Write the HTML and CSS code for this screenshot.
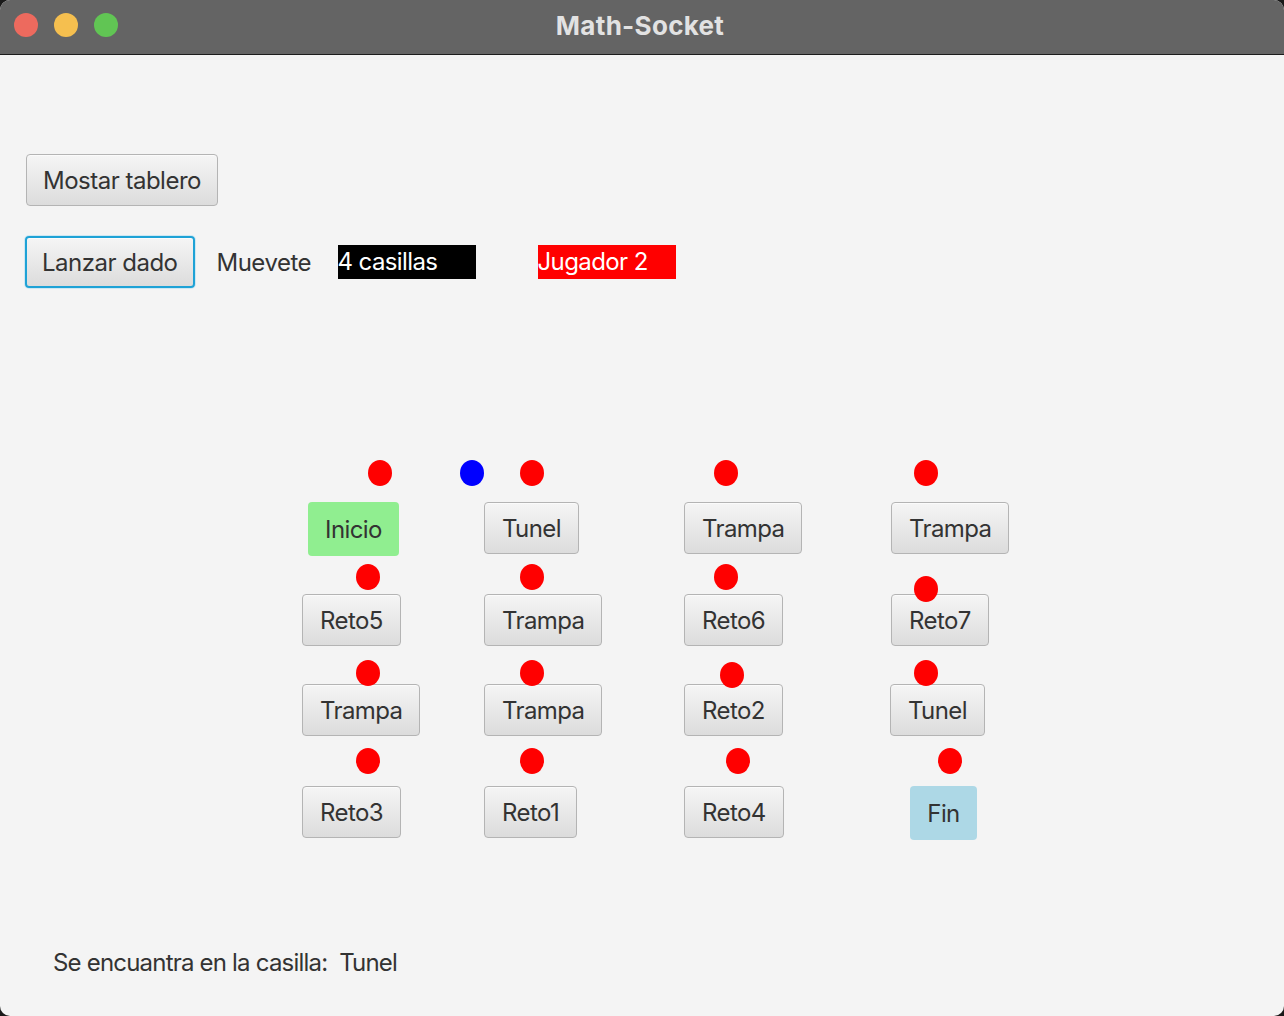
FILE: index.html
```html
<!DOCTYPE html>
<html lang="es">
<head>
<meta charset="utf-8">
<title>Math-Socket</title>
<link rel="stylesheet" href="styles.css">
</head>
<body>
<div class="window">
  <header class="titlebar">
    <div class="lights">
      <span class="light red"></span>
      <span class="light yellow"></span>
      <span class="light green"></span>
    </div>
    <div class="title">Math-Socket</div>
  </header>
  <main class="content">
    <section class="controls">
      <div class="row">
        <button class="fxbtn">Mostar tablero</button>
      </div>
      <div class="row row2">
        <button class="fxbtn focused">Lanzar dado</button>
        <span class="label muevete">Muevete</span>
        <span class="box black">4 casillas</span>
        <span class="box redbox">Jugador 2</span>
      </div>
    </section>
    <section class="board">
      <button class="fxbtn cell inicio c1 r1">Inicio</button>
      <button class="fxbtn cell c2 r1">Tunel</button>
      <button class="fxbtn cell c3 r1">Trampa</button>
      <button class="fxbtn cell c4 r1">Trampa</button>

      <button class="fxbtn cell c1b r2">Reto5</button>
      <button class="fxbtn cell c2 r2">Trampa</button>
      <button class="fxbtn cell c3 r2">Reto6</button>
      <button class="fxbtn cell c4 r2">Reto7</button>

      <button class="fxbtn cell c1b r3">Trampa</button>
      <button class="fxbtn cell c2 r3">Trampa</button>
      <button class="fxbtn cell c3 r3">Reto2</button>
      <button class="fxbtn cell c4b r3">Tunel</button>

      <button class="fxbtn cell c1b r4">Reto3</button>
      <button class="fxbtn cell c2 r4">Reto1</button>
      <button class="fxbtn cell c3 r4">Reto4</button>
      <button class="fxbtn cell fin r4">Fin</button>

      <span class="dot" style="left:368px;top:20px"></span>
      <span class="dot blue" style="left:460px;top:20px"></span>
      <span class="dot" style="left:520px;top:20px"></span>
      <span class="dot" style="left:714px;top:20px"></span>
      <span class="dot" style="left:914px;top:20px"></span>

      <span class="dot" style="left:356px;top:124px"></span>
      <span class="dot" style="left:520px;top:124px"></span>
      <span class="dot" style="left:714px;top:124px"></span>
      <span class="dot" style="left:914px;top:136px"></span>

      <span class="dot" style="left:356px;top:220px"></span>
      <span class="dot" style="left:520px;top:220px"></span>
      <span class="dot" style="left:720px;top:222px"></span>
      <span class="dot" style="left:914px;top:220px"></span>

      <span class="dot" style="left:356px;top:308px"></span>
      <span class="dot" style="left:520px;top:308px"></span>
      <span class="dot" style="left:726px;top:308px"></span>
      <span class="dot" style="left:938px;top:308px"></span>
    </section>
    <p class="status">Se encuantra en la casilla:&nbsp; Tunel</p>
  </main>
</div>
</body>
</html>
```
FILE: styles.css
```css
* { box-sizing: border-box; }

html, body {
  margin: 0;
  padding: 0;
  background: #1a1a1a;
}

body {
  width: 1284px;
  height: 1016px;
  overflow: hidden;
  font-family: "Inter", "Liberation Sans", sans-serif;
}

.window {
  width: 1284px;
  height: 1016px;
  background: #f4f4f4;
  border-radius: 10px;
  overflow: hidden;
  display: flex;
  flex-direction: column;
}

.titlebar {
  height: 55px;
  flex: 0 0 55px;
  background: #646464;
  border-bottom: 1px solid #1c1c1c;
  position: relative;
  display: flex;
  align-items: center;
  justify-content: center;
}

.lights {
  position: absolute;
  left: 14px;
  top: 13px;
  display: flex;
  gap: 16px;
}

.light {
  width: 24px;
  height: 24px;
  border-radius: 50%;
  display: block;
}
.light.red { background: #ed6a5e; }
.light.yellow { background: #f5bf4f; }
.light.green { background: #61c554; }

.title {
  color: #e2e2e2;
  font-weight: 700;
  font-size: 26px;
  letter-spacing: 0.3px;
  margin-top: -3px;
  margin-left: -4px;
}

.content {
  flex: 1;
  display: flex;
  flex-direction: column;
}

.controls {
  padding: 99px 0 0 26px;
  display: flex;
  flex-direction: column;
  gap: 30px;
}

.row {
  display: flex;
  align-items: center;
}

.fxbtn {
  font-family: inherit;
  font-size: 24px;
  color: #333333;
  height: 52px;
  padding: 0 17px;
  border: 1px solid #b4b4b4;
  border-radius: 4px;
  background: linear-gradient(#f5f5f5, #dcdcdc);
  box-shadow: inset 0 1px 0 #fbfbfb;
  display: flex;
  align-items: center;
  justify-content: center;
  white-space: nowrap;
  letter-spacing: -0.6px;
}

.controls .fxbtn { padding: 0 16px; letter-spacing: -0.5px; }

.controls .fxbtn.focused {
  margin-left: -1px;
  border: 2px solid #1ea2d6;
  box-shadow: 0 0 0 1px #cde8f3, inset 0 1px 0 #fbfbfb;
  padding: 0 15px;
}

.label {
  font-size: 24px;
  color: #333333;
  letter-spacing: -0.5px;
}

.muevete {
  margin-left: 22px;
  width: 121px;
}

.box {
  width: 138px;
  height: 34px;
  font-size: 24px;
  color: #ffffff;
  line-height: 34px;
  letter-spacing: -0.6px;
  white-space: nowrap;
  padding-left: 0;
}
.box.black { background: #000000; }
.box.redbox { background: #ff0000; margin-left: 62px; }

.board {
  position: relative;
  height: 420px;
  margin-top: 152px;
}

.cell { position: absolute; }
.c1 { left: 308px; }
.c1b { left: 302px; }
.c2 { left: 484px; }
.c3 { left: 684px; }
.c4 { left: 891px; }
.c4b { left: 890px; }
.r1 { top: 62px; }
.r2 { top: 154px; }
.r3 { top: 244px; }
.r4 { top: 346px; }

.inicio {
  background: #90ee90;
  border: none;
  box-shadow: none;
  height: 54px;
  width: 91px;
}

.fin {
  left: 910px;
  background: #add8e6;
  border: none;
  box-shadow: none;
  height: 54px;
  width: 67px;
}

.dot {
  position: absolute;
  width: 24px;
  height: 26px;
  border-radius: 50%;
  background: #ff0000;
  z-index: 2;
}
.dot.blue { background: #0000ff; }

.status {
  margin: 88px 0 0 53px;
  font-size: 24px;
  line-height: 30px;
  color: #333333;
  letter-spacing: -0.8px;
  word-spacing: 0;
}
```
